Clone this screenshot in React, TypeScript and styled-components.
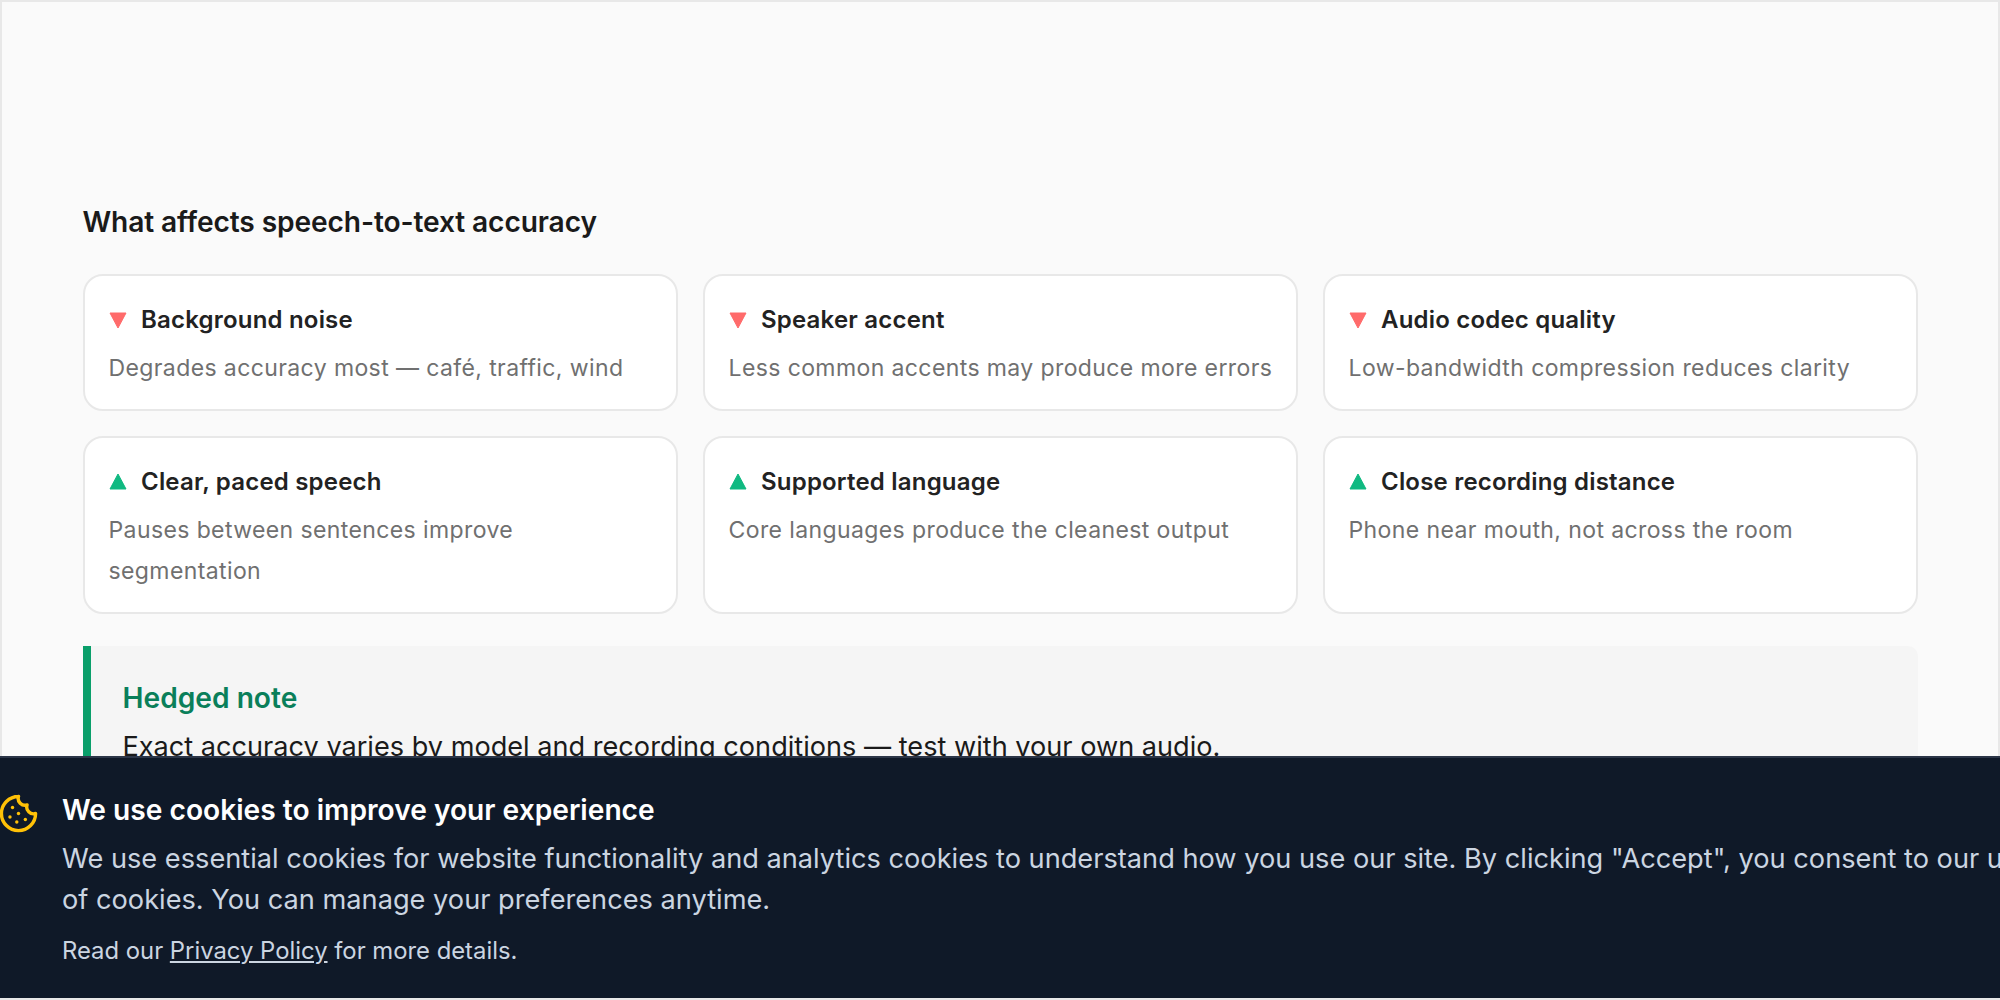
import React from 'react'
import styled, { createGlobalStyle } from 'styled-components'
import { Cookie } from 'lucide-react'

const factors = [
  { down: true, title: 'Background noise', text: 'Degrades accuracy most — café, traffic, wind' },
  { down: true, title: 'Speaker accent', text: 'Less common accents may produce more errors' },
  { down: true, title: 'Audio codec quality', text: 'Low-bandwidth compression reduces clarity' },
  { down: false, title: 'Clear, paced speech', text: 'Pauses between sentences improve segmentation' },
  { down: false, title: 'Supported language', text: 'Core languages produce the cleanest output' },
  { down: false, title: 'Close recording distance', text: 'Phone near mouth, not across the room' },
]

const App = () => {
  return (
    <>
      <GlobalStyle />
      <Page>
        <Heading>What affects speech-to-text accuracy</Heading>
        <CardGrid>
          {factors.map((f) => (
            <Card key={f.title}>
              <CardTitle>
                <Marker $down={f.down} viewBox="0 0 18 18">
                  <path d={f.down ? 'M1 2h16L9 17z' : 'M1 16h16L9 1z'} />
                </Marker>
                {f.title}
              </CardTitle>
              <CardText>{f.text}</CardText>
            </Card>
          ))}
        </CardGrid>
        <Note>
          <NoteTitle>Hedged note</NoteTitle>
          <NoteText>Exact accuracy varies by model and recording conditions — test with your own audio.</NoteText>
        </Note>
      </Page>
      <Banner>
        <CookieIcon>
          <Cookie size={41} strokeWidth={2} />
        </CookieIcon>
        <BannerBody>
          <BannerTitle>We use cookies to improve your experience</BannerTitle>
          <BannerText>
            We use essential cookies for website functionality and analytics cookies to understand how you use our site. By clicking "Accept", you consent to our use of cookies. You can manage your preferences anytime.
          </BannerText>
          <BannerSmall>
            Read our <a href="#privacy">Privacy Policy</a> for more details.
          </BannerSmall>
        </BannerBody>
      </Banner>
    </>
  )
}

const GlobalStyle = createGlobalStyle`
  html, body {
    margin: 0;
    height: 100%;
    overflow: hidden;
    background: #fafafa;
    font-family: Inter, "Liberation Sans", sans-serif;
  }
  * {
    box-sizing: border-box;
  }
`

const Page = styled.div`
  width: 2000px;
  height: 1000px;
  overflow: hidden;
  border: 2px solid #e8e8e8;
  background: #fafafa;
  padding: 204px 80.5px 0;
`

const Heading = styled.h2`
  margin: 0 0 36px;
  font-size: 28.16px;
  line-height: 32px;
  letter-spacing: -0.12px;
  font-weight: 600;
  color: #1a1a1a;
`

const CardGrid = styled.div`
  display: grid;
  grid-template-columns: repeat(3, 1fr);
  gap: 25px;
`

const Card = styled.div`
  background: #fff;
  border: 2px solid #e8e8e8;
  border-radius: 20px;
  padding: 28px 20px 20px 24px;
`

const CardTitle = styled.div`
  display: flex;
  align-items: center;
  gap: 14.5px;
  font-size: 24px;
  line-height: 32px;
  letter-spacing: 0.2px;
  font-weight: 600;
  color: #222;
  margin-bottom: 12px;
`

const Marker = styled.svg<{ $down: boolean }>`
  flex: none;
  width: 18px;
  height: 18px;
  fill: ${(p) => (p.$down ? '#ff6b6b' : '#10b981')};
  stroke: ${(p) => (p.$down ? '#ff6b6b' : '#10b981')};
  stroke-width: 1;
  stroke-linejoin: round;
`

const CardText = styled.div`
  font-size: 23.04px;
  line-height: 41px;
  letter-spacing: 0.38px;
  color: #707070;
`

const Note = styled.div`
  margin-top: 32px;
  background: #f5f5f5;
  border-left: 8px solid #0a9f6a;
  border-radius: 0 10px 10px 0;
  padding: 36px 32px 32px;
`

const NoteTitle = styled.div`
  font-size: 28.16px;
  line-height: 32px;
  font-weight: 600;
  color: #0a7f5a;
  margin-bottom: 16.5px;
`

const NoteText = styled.div`
  font-size: 27.14px;
  line-height: 32px;
  color: #1a1a1a;
`

const Banner = styled.div`
  position: fixed;
  left: 0;
  right: 0;
  bottom: 2px;
  height: 242px;
  overflow: hidden;
  display: flex;
  align-items: flex-start;
  gap: 23px;
  padding-top: 33.5px;
  background: #0f1928;
  border-top: 2px solid #2c3648;
`

const CookieIcon = styled.div`
  flex: none;
  display: flex;
  margin: 1px 0 0 -2px;
  color: #ffc107;
`

const BannerBody = styled.div`
  flex: none;
  width: 1990px;
`

const BannerTitle = styled.div`
  font-size: 28.16px;
  line-height: 36px;
  font-weight: 600;
  color: #fff;
  margin-bottom: 10px;
`

const BannerText = styled.div`
  font-size: 27.2px;
  line-height: 41px;
  color: #cbd5e1;
  margin-bottom: 15px;
`

const BannerSmall = styled.div`
  font-size: 23.84px;
  line-height: 32px;
  color: #cbd5e1;

  a {
    color: inherit;
    text-decoration: underline;
  }
`

export default App
